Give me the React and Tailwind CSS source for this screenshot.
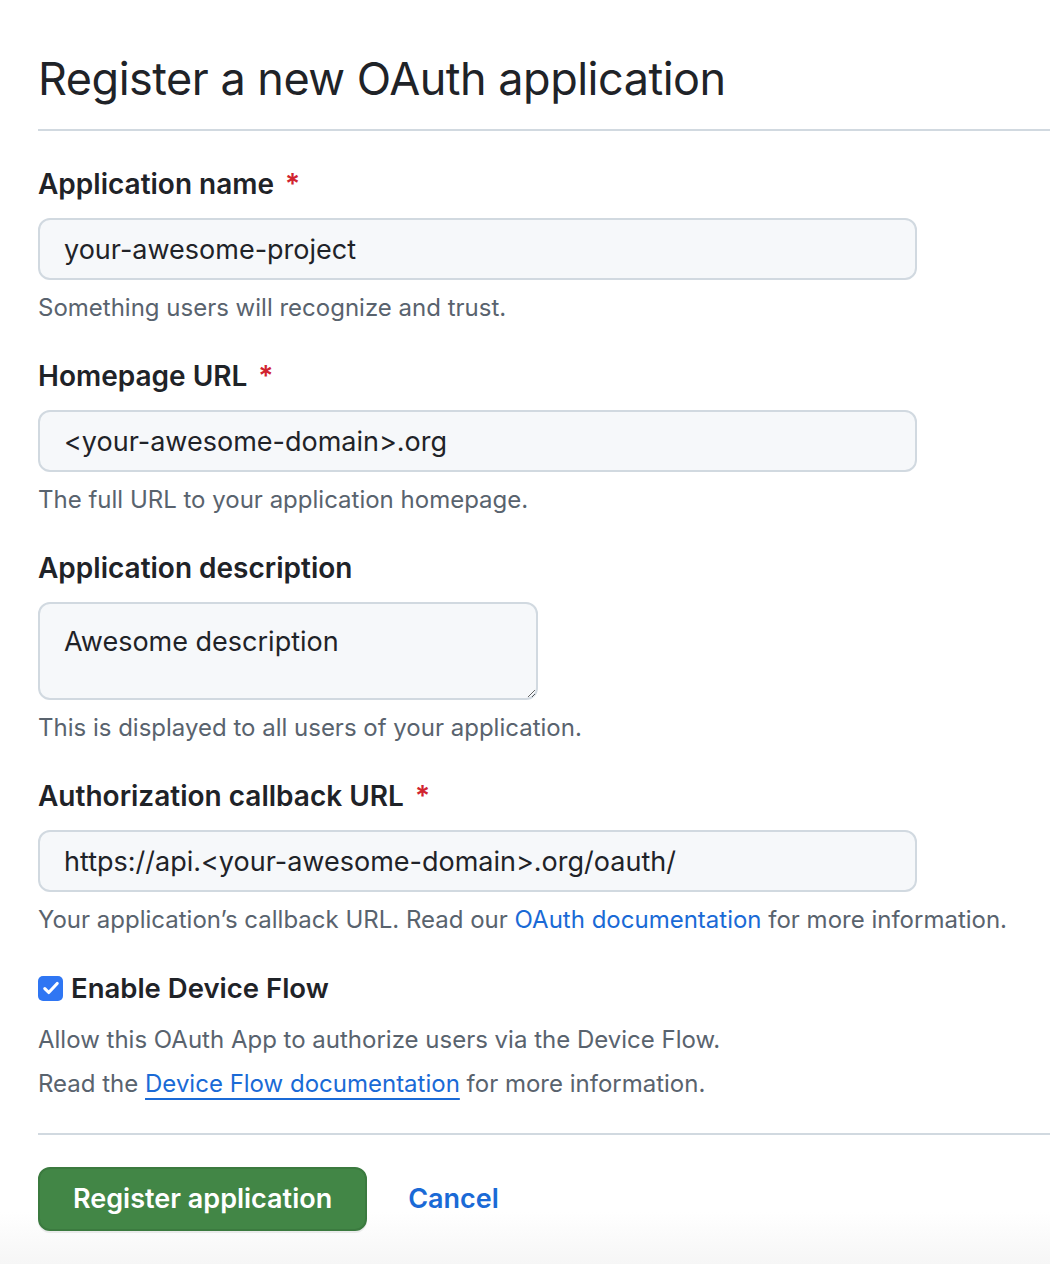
import React from "react";

const Field = ({ label, required, value, hint }) => {
    return (
        <div className="flex flex-col">
            <label className="text-[28px] leading-[36px] font-semibold text-[#1f2328]">
                {label}
                {required && <span className="text-[#d1242f] ml-[11px]">*</span>}
            </label>
            <input
                readOnly
                value={value}
                className="mt-[16px] w-[879px] h-[62px] rounded-[12px] border-[2px] border-[#d1d9e0] bg-[#f6f8fa] px-[24px] text-[27px] text-[#1f2328] outline-none"
            />
            <p className="mt-[12px] text-[24px] leading-[32px] text-[#59636e]">{hint}</p>
        </div>
    );
};

const App = () => {
    return (
        <div className="w-[1050px] h-[1264px] overflow-hidden bg-[linear-gradient(to_bottom,#ffffff_1212px,#f6f6f6_1264px)] font-['Inter','Liberation_Sans',sans-serif]">
            <div className="pl-[38px] pt-[51px]">
                <h2 className="text-[45px] leading-[56px] font-normal text-[#1f2328] tracking-[-0.5px]">
                    Register a new OAuth application
                </h2>
                <div className="mt-[22px] h-[2px] bg-[#d1d9e0]" />

                <div className="mt-[35px] flex flex-col gap-[34px]">
                    <Field
                        label="Application name"
                        required
                        value="your-awesome-project"
                        hint="Something users will recognize and trust."
                    />
                    <Field
                        label="Homepage URL"
                        required
                        value="<your-awesome-domain>.org"
                        hint="The full URL to your application homepage."
                    />

                    <div className="flex flex-col">
                        <label className="text-[28px] leading-[36px] font-semibold text-[#1f2328]">
                            Application description
                        </label>
                        <textarea
                            readOnly
                            value="Awesome description"
                            className="mt-[16px] w-[500px] h-[98px] rounded-[12px] border-[2px] border-[#d1d9e0] bg-[#f6f8fa] px-[24px] py-[20px] text-[27px] leading-[36px] text-[#1f2328] outline-none resize-y"
                        />
                        <p className="mt-[12px] text-[24px] leading-[32px] text-[#59636e]">
                            This is displayed to all users of your application.
                        </p>
                    </div>

                    <div className="flex flex-col">
                        <label className="text-[28px] leading-[36px] font-semibold text-[#1f2328]">
                            Authorization callback URL
                            <span className="text-[#d1242f] ml-[11px]">*</span>
                        </label>
                        <input
                            readOnly
                            value="https://api.<your-awesome-domain>.org/oauth/"
                            className="mt-[16px] w-[879px] h-[62px] rounded-[12px] border-[2px] border-[#d1d9e0] bg-[#f6f8fa] px-[24px] text-[27px] text-[#1f2328] outline-none"
                        />
                        <p className="mt-[12px] text-[24px] leading-[32px] text-[#59636e]">
                            Your application’s callback URL. Read our{" "}
                            <a href="#" className="text-[#1a6ad6]">OAuth documentation</a> for more information.
                        </p>
                    </div>

                    <div className="flex flex-col">
                        <div className="flex items-center gap-[8px]">
                            <span className="w-[25px] h-[25px] rounded-[5px] bg-[#2f76f3] flex items-center justify-center">
                                <svg width="18" height="18" viewBox="0 0 16 16" fill="none">
                                    <path d="M2.5 8.5l3.5 3.5 7.5-8" stroke="#fff" strokeWidth="2.8" strokeLinecap="round" strokeLinejoin="round" />
                                </svg>
                            </span>
                            <span className="text-[27.5px] leading-[36px] font-semibold text-[#1f2328]">Enable Device Flow</span>
                        </div>
                        <p className="mt-[18px] text-[24px] leading-[32px] text-[#59636e]">
                            Allow this OAuth App to authorize users via the Device Flow.
                        </p>
                        <p className="mt-[12px] text-[24px] leading-[32px] text-[#59636e]">
                            Read the{" "}
                            <a href="#" className="text-[#1a6ad6] underline decoration-[2px] underline-offset-[6px]">Device Flow documentation</a>{" "}
                            for more information.
                        </p>
                    </div>
                </div>

                <div className="mt-[33px] h-[2px] bg-[#d1d9e0]" />

                <div className="mt-[32px] flex items-center gap-[41px]">
                    <button className="h-[64px] px-[33px] rounded-[12px] bg-[#428646] border-[2px] border-[#3b7a3f] text-white text-[27px] font-semibold shadow-[0_2px_0_rgba(31,35,40,0.08)]">
                        Register application
                    </button>
                    <a href="#" className="text-[27px] font-semibold text-[#1a6ad6]">Cancel</a>
                </div>
            </div>
        </div>
    );
};

export default App;
